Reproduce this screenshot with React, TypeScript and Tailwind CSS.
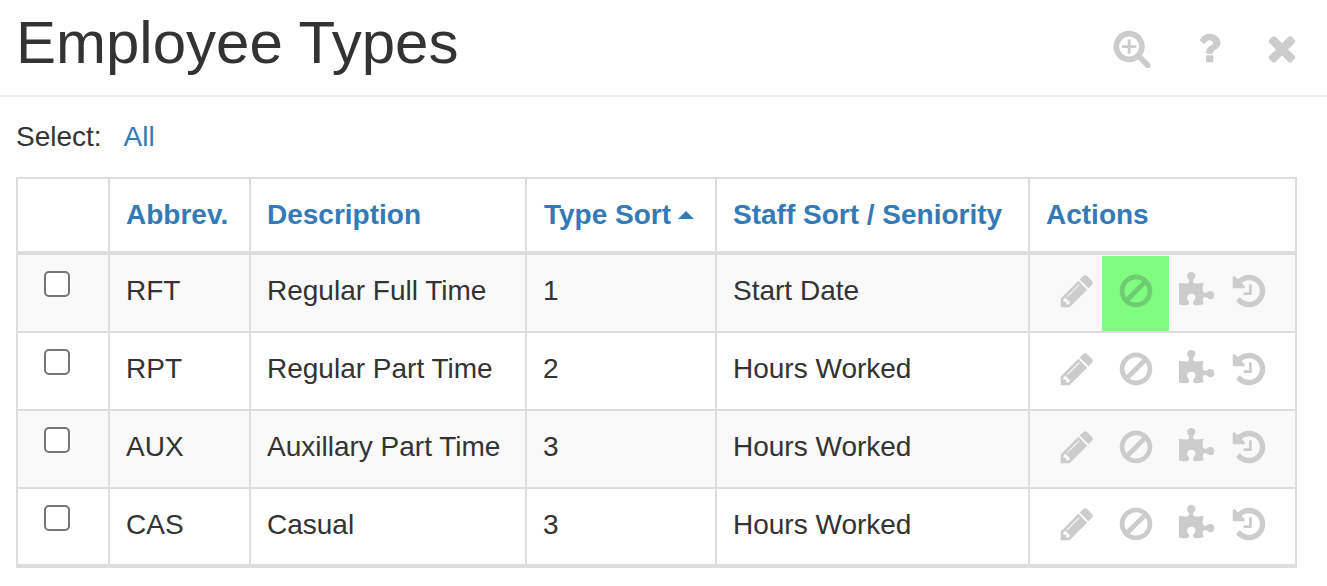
const rows = [
  { abbrev: 'RFT', description: 'Regular Full Time', sort: '1', staff: 'Start Date', active: true },
  { abbrev: 'RPT', description: 'Regular Part Time', sort: '2', staff: 'Hours Worked', active: false },
  { abbrev: 'AUX', description: 'Auxillary Part Time', sort: '3', staff: 'Hours Worked', active: false },
  { abbrev: 'CAS', description: 'Casual', sort: '3', staff: 'Hours Worked', active: false },
]

// font awesome 4 glyphs on their 1792 grid
const paths = {
  pencil: 'M491 1536l91-91-235-235-91 91v107h128v128h107zm523-928q0-22-22-22-10 0-17 7l-542 542q-7 7-7 17 0 22 22 22 10 0 17-7l542-542q7-7 7-17zm-54-192l416 416-832 832h-416v-416zm683 96q0 53-37 90l-166 166-416-416 166-165q36-38 90-38 53 0 91 38l235 234q37 39 37 91z',
  ban: 'M1440 893q0-161-87-295l-754 753q137 89 297 89 111 0 211.500-43.500t173.500-116.500 116-174.500 43-212.500zm-999 299l755-754q-135-91-300-91-148 0-273 73t-198 199-73 274q0 162 89 299zm1223-299q0 157-61 300t-163.500 246-245 164-298.500 61-298.500-61-245-164-163.500-246-61-300 61-299.500 163.500-245.500 245-164 298.500-61 298.500 61 245 164 163.500 245.500 61 299.500z',
  puzzle: 'M1664 1098q0 81-44.500 135t-123.500 54q-41 0-77.500-17.500t-59-38-56.500-38-71-17.500q-110 0-110 124 0 39 16 115t15 115v5q-22 0-33 1-34 3-97.500 11.500t-115.500 13.500-98 5q-61 0-103-26.500t-42-83.500q0-37 17.500-71t38-56.500 38-59 17.500-77.500q0-79-54-123.500t-135-44.500q-84 0-143 45.500t-59 127.500q0 43 15 83t33.500 64.500 33.500 53 15 50.500q0 45-46 89-37 35-117 35-95 0-245-24-9-2-27.500-4t-27.500-4l-13-2q-1 0-3-1-2 0-2-1v-1024q2 1 17.500 3.500t34 5 21.500 3.500q150 24 245 24 80 0 117-35 46-44 46-89 0-22-15-50.500t-33.500-53-33.500-64.500-15-83q0-82 59-127.500t144-45.500q80 0 134 44.500t54 123.500q0 41-17.500 77.500t-38 59-38 56.500-17.500 71q0 57 42 83.500t103 26.500q64 0 180-15t163-17v2q-1 2-3.500 17.500t-5 34-3.500 21.500q-24 150-24 245 0 80 35 117 44 46 89 46 22 0 50.500-15t53-33.500 64.500-33.500 83-15q82 0 127.500 59t45.500 143z',
  history: 'M1664 896q0 156-61 298t-164 245-245 164-298 61q-172 0-327-72.500t-264-204.500q-7-10-6.500-22.500t8.500-20.500l137-138q10-9 25-9 16 2 23 12 73 95 179 147t225 52q104 0 198.500-40.500t163.500-109.500 109.500-163.500 40.500-198.500-40.500-198.500-109.500-163.500-163.500-109.500-198.500-40.500q-98 0-188 35.500t-160 101.500l137 138q31 30 14 69-17 40-59 40h-448q-26 0-45-19t-19-45v-448q0-42 40-59 39-17 69 14l130 129q107-101 244.500-156.500t284.500-55.500q156 0 298 61t245 164 164 245 61 298zm-640-288v448q0 14-9 23t-23 9h-320q-14 0-23-9t-9-23v-64q0-14 9-23t23-9h224v-352q0-14 9-23t23-9h64q14 0 23 9t9 23z',
  search: 'M1088 800v64q0 13-9.500 22.500t-22.500 9.500h-224v224q0 13-9.500 22.500t-22.500 9.500h-64q-13 0-22.500-9.500t-9.500-22.500v-224h-224q-13 0-22.500-9.500t-9.500-22.500v-64q0-13 9.500-22.500t22.500-9.500h224v-224q0-13 9.500-22.500t22.500-9.500h64q13 0 22.500 9.500t9.500 22.500v224h224q13 0 22.500 9.500t9.500 22.500zm128 32q0-185-131.500-316.500t-316.500-131.500-316.500 131.500-131.500 316.500 131.500 316.500 316.500 131.500 316.500-131.500 131.500-316.500zm512 832q0 53-37.500 90.500t-90.500 37.500q-54 0-90-38l-343-342q-179 124-399 124-143 0-273.500-55.500t-225-150-150-225-55.500-273.500 55.500-273.500 150-225 225-150 273.500-55.500 273.500 55.500 225 150 150 225 55.500 273.500q0 220-124 399l343 343q37 37 37 90z',
  question: 'M1088 1256v240q0 16-12 28t-28 12h-240q-16 0-28-12t-12-28v-240q0-16 12-28t28-12h240q16 0 28 12t12 28zm316-600q0 54-15.500 101t-35 76.500-55 59.500-57.500 43.500-61 35.500q-41 23-68.500 65t-27.500 67q0 17-12 32.500t-28 15.500h-240q-15 0-25.500-18.500t-10.500-37.500v-45q0-83 65-156.500t143-108.500q59-27 84-56t25-76q0-42-46.500-74t-107.500-32q-65 0-108 29-35 25-107 115-13 16-31 16-12 0-25-8l-164-125q-13-10-15.500-25t5.500-28q160-266 464-266 80 0 161 31t146 83 106 127.500 41 158.500z',
  close: 'M1490 1322q0 40-28 68l-136 136q-28 28-68 28t-68-28l-294-294-294 294q-28 28-68 28t-68-28l-136-136q-28-28-28-68t28-68l294-294-294-294q-28-28-28-68t28-68l136-136q28-28 68-28t68 28l294 294 294-294q28-28 68-28t68 28l136 136q28 28 28 68t-28 68l-294 294 294 294q28 28 28 68z',
}

function Icon({ d, className }: { d: string; className: string }) {
  return (
    <svg viewBox="0 0 1792 1792" fill="currentColor" className={className}>
      <path d={d} />
    </svg>
  )
}

function Actions({ active }: { active: boolean }) {
  const size = 'mb-[6px] size-[38px]'
  return (
    <div className="flex h-[75px] items-center pl-[28px] text-[#cccccc]">
      <span className="flex w-[44px] justify-start">
        <Icon d={paths.pencil} className={size} />
      </span>
      <span className={`flex h-full w-[67px] items-center justify-center ${active ? 'bg-[#80fc80] text-[#70cc70]' : ''}`}>
        <Icon d={paths.ban} className={`${size} ml-[1px]`} />
      </span>
      <span className="ml-[10px] flex w-[38px] justify-center">
        <Icon d={paths.puzzle} className={size} />
      </span>
      <span className="ml-[13px] flex">
        <Icon d={paths.history} className={size} />
      </span>
    </div>
  )
}

export default function App() {
  const th = 'border-2 border-[#dddddd] border-b-[4px] px-[16px] text-left align-middle font-bold text-[#337ab7]'
  const td = 'border-2 border-[#dddddd] px-[16px] pt-[16px] align-top leading-[40px] group-last:border-b-[4px]'
  return (
    <div className="h-[586px] overflow-hidden bg-white text-[28px] text-[#333333] [font-family:'Liberation_Sans',Arial,sans-serif]">
      <div className="flex h-[97px] items-center justify-between border-b-2 border-[#eeeeee] pl-[16px] pr-[25px]">
        <h1 className="mb-[10px] text-[60px] leading-[85px] font-normal">Employee Types</h1>
        <div className="flex items-center text-[#cccccc]">
          <Icon d={paths.search} className="size-[40px]" />
          <Icon d={paths.question} className="ml-[37px] size-[40px]" />
          <Icon d={paths.close} className="ml-[33px] size-[40px]" />
        </div>
      </div>
      <div className="flex h-[80px] items-center pl-[16px]">
        <span>Select:</span>
        <a className="ml-[22px] text-[#337ab7]">All</a>
      </div>
      <table className="ml-[16px] w-[1279px] table-fixed border-collapse">
        <colgroup>
          <col className="w-[92px]" />
          <col className="w-[141px]" />
          <col className="w-[276px]" />
          <col className="w-[190px]" />
          <col className="w-[313px]" />
          <col className="w-[267px]" />
        </colgroup>
        <thead>
          <tr className="h-[75px]">
            <th className={th}></th>
            <th className={th}>Abbrev.</th>
            <th className={th}>Description</th>
            <th className={th}>
              <span className="ml-[1px] flex items-center whitespace-nowrap">
                Type Sort
                <span className="ml-[7px] h-0 w-0 border-x-[8px] border-b-[8px] border-x-transparent border-b-[#337ab7]"></span>
              </span>
            </th>
            <th className={th}>Staff Sort / Seniority</th>
            <th className={th}>Actions</th>
          </tr>
        </thead>
        <tbody>
          {rows.map((row, i) => (
            <tr key={row.abbrev} className={`group ${i === 0 ? 'h-[79px]' : 'h-[78px]'} ${i % 2 === 0 ? 'bg-[#f9f9f9]' : 'bg-white'}`}>
              <td className={td}>
                <span className="ml-[10px] block size-[26px] rounded-[5px] border-2 border-[#767676] bg-white"></span>
              </td>
              <td className={td}>{row.abbrev}</td>
              <td className={`${td} whitespace-nowrap`}>{row.description}</td>
              <td className={td}>{row.sort}</td>
              <td className={td}>{row.staff}</td>
              <td className="border-2 border-[#dddddd] p-0 align-bottom group-last:border-b-[4px]">
                <Actions active={row.active} />
              </td>
            </tr>
          ))}
        </tbody>
      </table>
    </div>
  )
}
